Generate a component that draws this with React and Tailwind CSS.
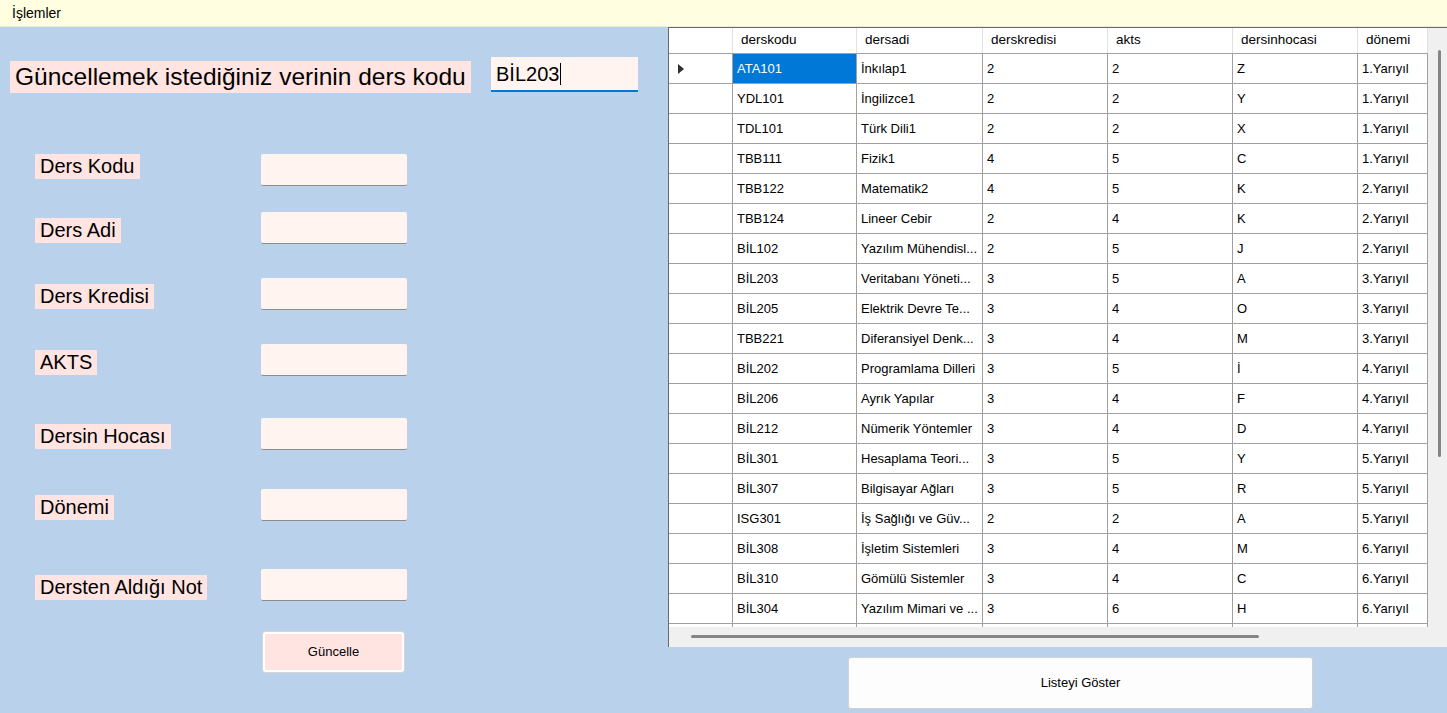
// App.jsx — Ders güncelleme formu + ders listesi (WinForms görünümü)

const font = { fontFamily: '"Liberation Sans", Arial, sans-serif' };

const fields = [
  { label: 'Ders Kodu', mt: 'mt-[61px]', off: 'mt-0' },
  { label: 'Ders Adi', mt: 'mt-[26px]', off: 'mt-[6px]' },
  { label: 'Ders Kredisi', mt: 'mt-[34px]', off: 'mt-[6px]' },
  { label: 'AKTS', mt: 'mt-[34px]', off: 'mt-[6px]' },
  { label: 'Dersin Hocası', mt: 'mt-[42px]', off: 'mt-[6px]' },
  { label: 'Dönemi', mt: 'mt-[39px]', off: 'mt-[6px]' },
  { label: 'Dersten Aldığı Not', mt: 'mt-[48px]', off: 'mt-[6px]' },
];

const columns = [
  { key: 'kod', title: 'derskodu', w: 'w-[124px]' },
  { key: 'ad', title: 'dersadi', w: 'w-[126px]' },
  { key: 'kredi', title: 'derskredisi', w: 'w-[125px]' },
  { key: 'akts', title: 'akts', w: 'w-[125px]' },
  { key: 'hoca', title: 'dersinhocasi', w: 'w-[125px]' },
  { key: 'donem', title: 'dönemi', w: 'w-[70px]' },
];

const rows = [
  ['ATA101', 'İnkılap1', '2', '2', 'Z', '1.Yarıyıl'],
  ['YDL101', 'İngilizce1', '2', '2', 'Y', '1.Yarıyıl'],
  ['TDL101', 'Türk Dili1', '2', '2', 'X', '1.Yarıyıl'],
  ['TBB111', 'Fizik1', '4', '5', 'C', '1.Yarıyıl'],
  ['TBB122', 'Matematik2', '4', '5', 'K', '2.Yarıyıl'],
  ['TBB124', 'Lineer Cebir', '2', '4', 'K', '2.Yarıyıl'],
  ['BİL102', 'Yazılım Mühendisl...', '2', '5', 'J', '2.Yarıyıl'],
  ['BİL203', 'Veritabanı Yöneti...', '3', '5', 'A', '3.Yarıyıl'],
  ['BİL205', 'Elektrik Devre Te...', '3', '4', 'O', '3.Yarıyıl'],
  ['TBB221', 'Diferansiyel Denk...', '3', '4', 'M', '3.Yarıyıl'],
  ['BİL202', 'Programlama Dilleri', '3', '5', 'İ', '4.Yarıyıl'],
  ['BİL206', 'Ayrık Yapılar', '3', '4', 'F', '4.Yarıyıl'],
  ['BİL212', 'Nümerik Yöntemler', '3', '4', 'D', '4.Yarıyıl'],
  ['BİL301', 'Hesaplama Teori...', '3', '5', 'Y', '5.Yarıyıl'],
  ['BİL307', 'Bilgisayar Ağları', '3', '5', 'R', '5.Yarıyıl'],
  ['ISG301', 'İş Sağlığı ve Güv...', '2', '2', 'A', '5.Yarıyıl'],
  ['BİL308', 'İşletim Sistemleri', '3', '4', 'M', '6.Yarıyıl'],
  ['BİL310', 'Gömülü Sistemler', '3', '4', 'C', '6.Yarıyıl'],
  ['BİL304', 'Yazılım Mimari ve ...', '3', '6', 'H', '6.Yarıyıl'],
  ['', '', '', '', '', ''],
];

function MenuBar() {
  return (
    <div className="h-[27px] bg-[#fffee1] border-b border-[#ecebd6] flex items-center pl-[12px] text-[14px] text-black">
      İşlemler
    </div>
  );
}

function TextBox() {
  return (
    <div className="w-[146px] h-[32px] bg-[#fff4ef] rounded-[2px] border-b border-[#8c8c8c]" />
  );
}

function FormPanel() {
  return (
    <div className="w-[668px] shrink-0 flex flex-col">
      <div className="flex items-start mt-[30px]">
        <div className="ml-[10px] mt-[4px] w-[461px] h-[32px] leading-[32px] bg-[#ffe4e1] pl-[5px] text-[24.5px] text-black whitespace-nowrap">
          Güncellemek istediğiniz verinin ders kodu
        </div>
        <div className="ml-[20px] w-[147px] h-[35px] bg-[#fff4ef] border-b-2 border-[#0078d7] flex items-center pl-[5px] text-[20px] text-black">
          BİL203
          <span className="inline-block w-px h-[22px] bg-black ml-px" />
        </div>
      </div>

      {fields.map((f) => (
        <div key={f.label} className={`flex items-start ${f.mt}`}>
          <div className="w-[261px] shrink-0 pl-[35px]">
            <span className={`inline-block ${f.off} h-[25px] leading-[25px] bg-[#ffe4e1] px-[5px] text-[20px] text-black whitespace-nowrap`}>
              {f.label}
            </span>
          </div>
          <TextBox />
        </div>
      ))}

      <button className="mt-[31px] ml-[263px] w-[141px] h-[40px] bg-[#ffe4e1] border-2 border-white rounded-[3px] shadow-[0_0_0_1px_#d6d6d6] text-[13px] text-black">
        Güncelle
      </button>
    </div>
  );
}

function Arrow() {
  return (
    <svg width="6" height="10" viewBox="0 0 6 10">
      <path d="M0 0 L6 5 L0 10 Z" fill="#303030" />
    </svg>
  );
}

function DataGrid() {
  return (
    <div className="h-[620px] border-l border-t border-[#6a6a6a] bg-[#f0f0f0] flex flex-col">
      <div className="flex h-[599px]">
        <div className="w-[759px] bg-white overflow-hidden text-[13px] text-black">
          <div className="flex h-[26px] border-b border-[#a0a0a0]">
            <div className="w-[64px] border-r border-[#e2e2e2]" />
            {columns.map((c) => (
              <div key={c.key} className={`${c.w} shrink-0 flex items-center pl-[8px] border-r border-[#e2e2e2] text-[13.5px]`}>
                {c.title}
              </div>
            ))}
          </div>
          <div className="h-[573px] overflow-hidden">
            {rows.map((r, i) => (
              <div key={i} className="flex h-[30px] border-b border-[#a0a0a0]">
                <div className="w-[64px] shrink-0 flex items-center pl-[9px] border-r border-[#a0a0a0]">
                  {i === 0 && <Arrow />}
                </div>
                {columns.map((c, j) => (
                  <div
                    key={c.key}
                    className={`${c.w} shrink-0 flex items-center pl-[4px] border-r border-[#a0a0a0] whitespace-nowrap overflow-hidden ${
                      i === 0 && j === 0 ? 'bg-[#0078d7] text-white' : ''
                    }`}
                  >
                    {r[j]}
                  </div>
                ))}
              </div>
            ))}
          </div>
        </div>
        <div className="w-[19px] shrink-0">
          <div className="ml-[10px] mt-[22px] w-[3px] h-[407px] bg-[#858585] rounded-full" />
        </div>
      </div>
      <div className="h-[20px]">
        <div className="ml-[22px] mt-[8px] w-[568px] h-[3px] bg-[#858585] rounded-full" />
      </div>
    </div>
  );
}

export default function App() {
  return (
    <div className="w-[1447px] h-[713px] overflow-hidden bg-[#b9d1ea] flex flex-col" style={font}>
      <MenuBar />
      <div className="flex flex-1">
        <FormPanel />
        <div className="flex-1 flex flex-col">
          <DataGrid />
          <button className="mt-[10px] ml-[180px] w-[465px] h-[52px] bg-[#fdfdfd] border border-[#d2d2d2] rounded-[3px] text-[13px] text-black">
            Listeyi Göster
          </button>
        </div>
      </div>
    </div>
  );
}
